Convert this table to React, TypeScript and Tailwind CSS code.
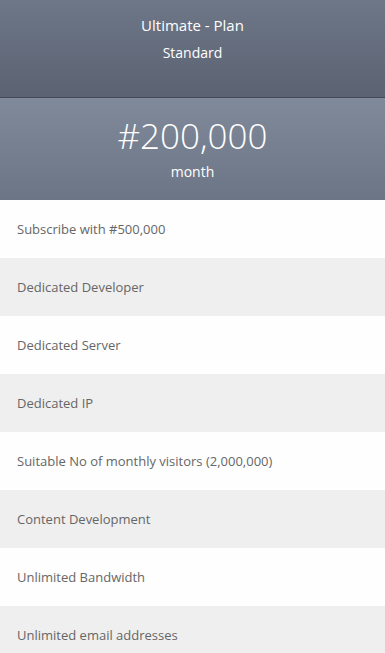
import React from 'react';

const features = [
  'Subscribe with #500,000',
  'Dedicated Developer',
  'Dedicated Server',
  'Dedicated IP',
  'Suitable No of monthly visitors (2,000,000)',
  'Content Development',
  'Unlimited Bandwidth',
  'Unlimited email addresses',
];

export default function App() {
  return (
    <div className="min-h-screen bg-white font-['Open_Sans',sans-serif]">
      {/* Plan header */}
      <div className="h-[98px] bg-gradient-to-b from-[#6e7787] to-[#5b6373] border-b border-[#434955] text-center text-white pt-[14px]">
        <h2 className="text-[15px] leading-[22px]">Ultimate - Plan</h2>
        <p className="text-[14px] leading-[20px] mt-[7px]">Standard</p>
      </div>

      {/* Price */}
      <div className="h-[102px] bg-gradient-to-b from-[#808a9a] to-[#6c7585] text-center text-white pt-[15px]">
        <div className="text-[35px] font-light leading-[46px]">#200,000</div>
        <div className="text-[14px] leading-[20px] mt-[3px]">month</div>
      </div>

      {/* Features */}
      <ul>
        {features.map((f, i) => (
          <li
            key={f}
            className={`h-[58px] flex items-center px-[17px] pt-[2px] text-[13px] text-[#666] ${
              i % 2 === 0 ? 'bg-[#fefefe]' : 'bg-[#efefef]'
            }`}
          >
            {f}
          </li>
        ))}
      </ul>
    </div>
  );
}
